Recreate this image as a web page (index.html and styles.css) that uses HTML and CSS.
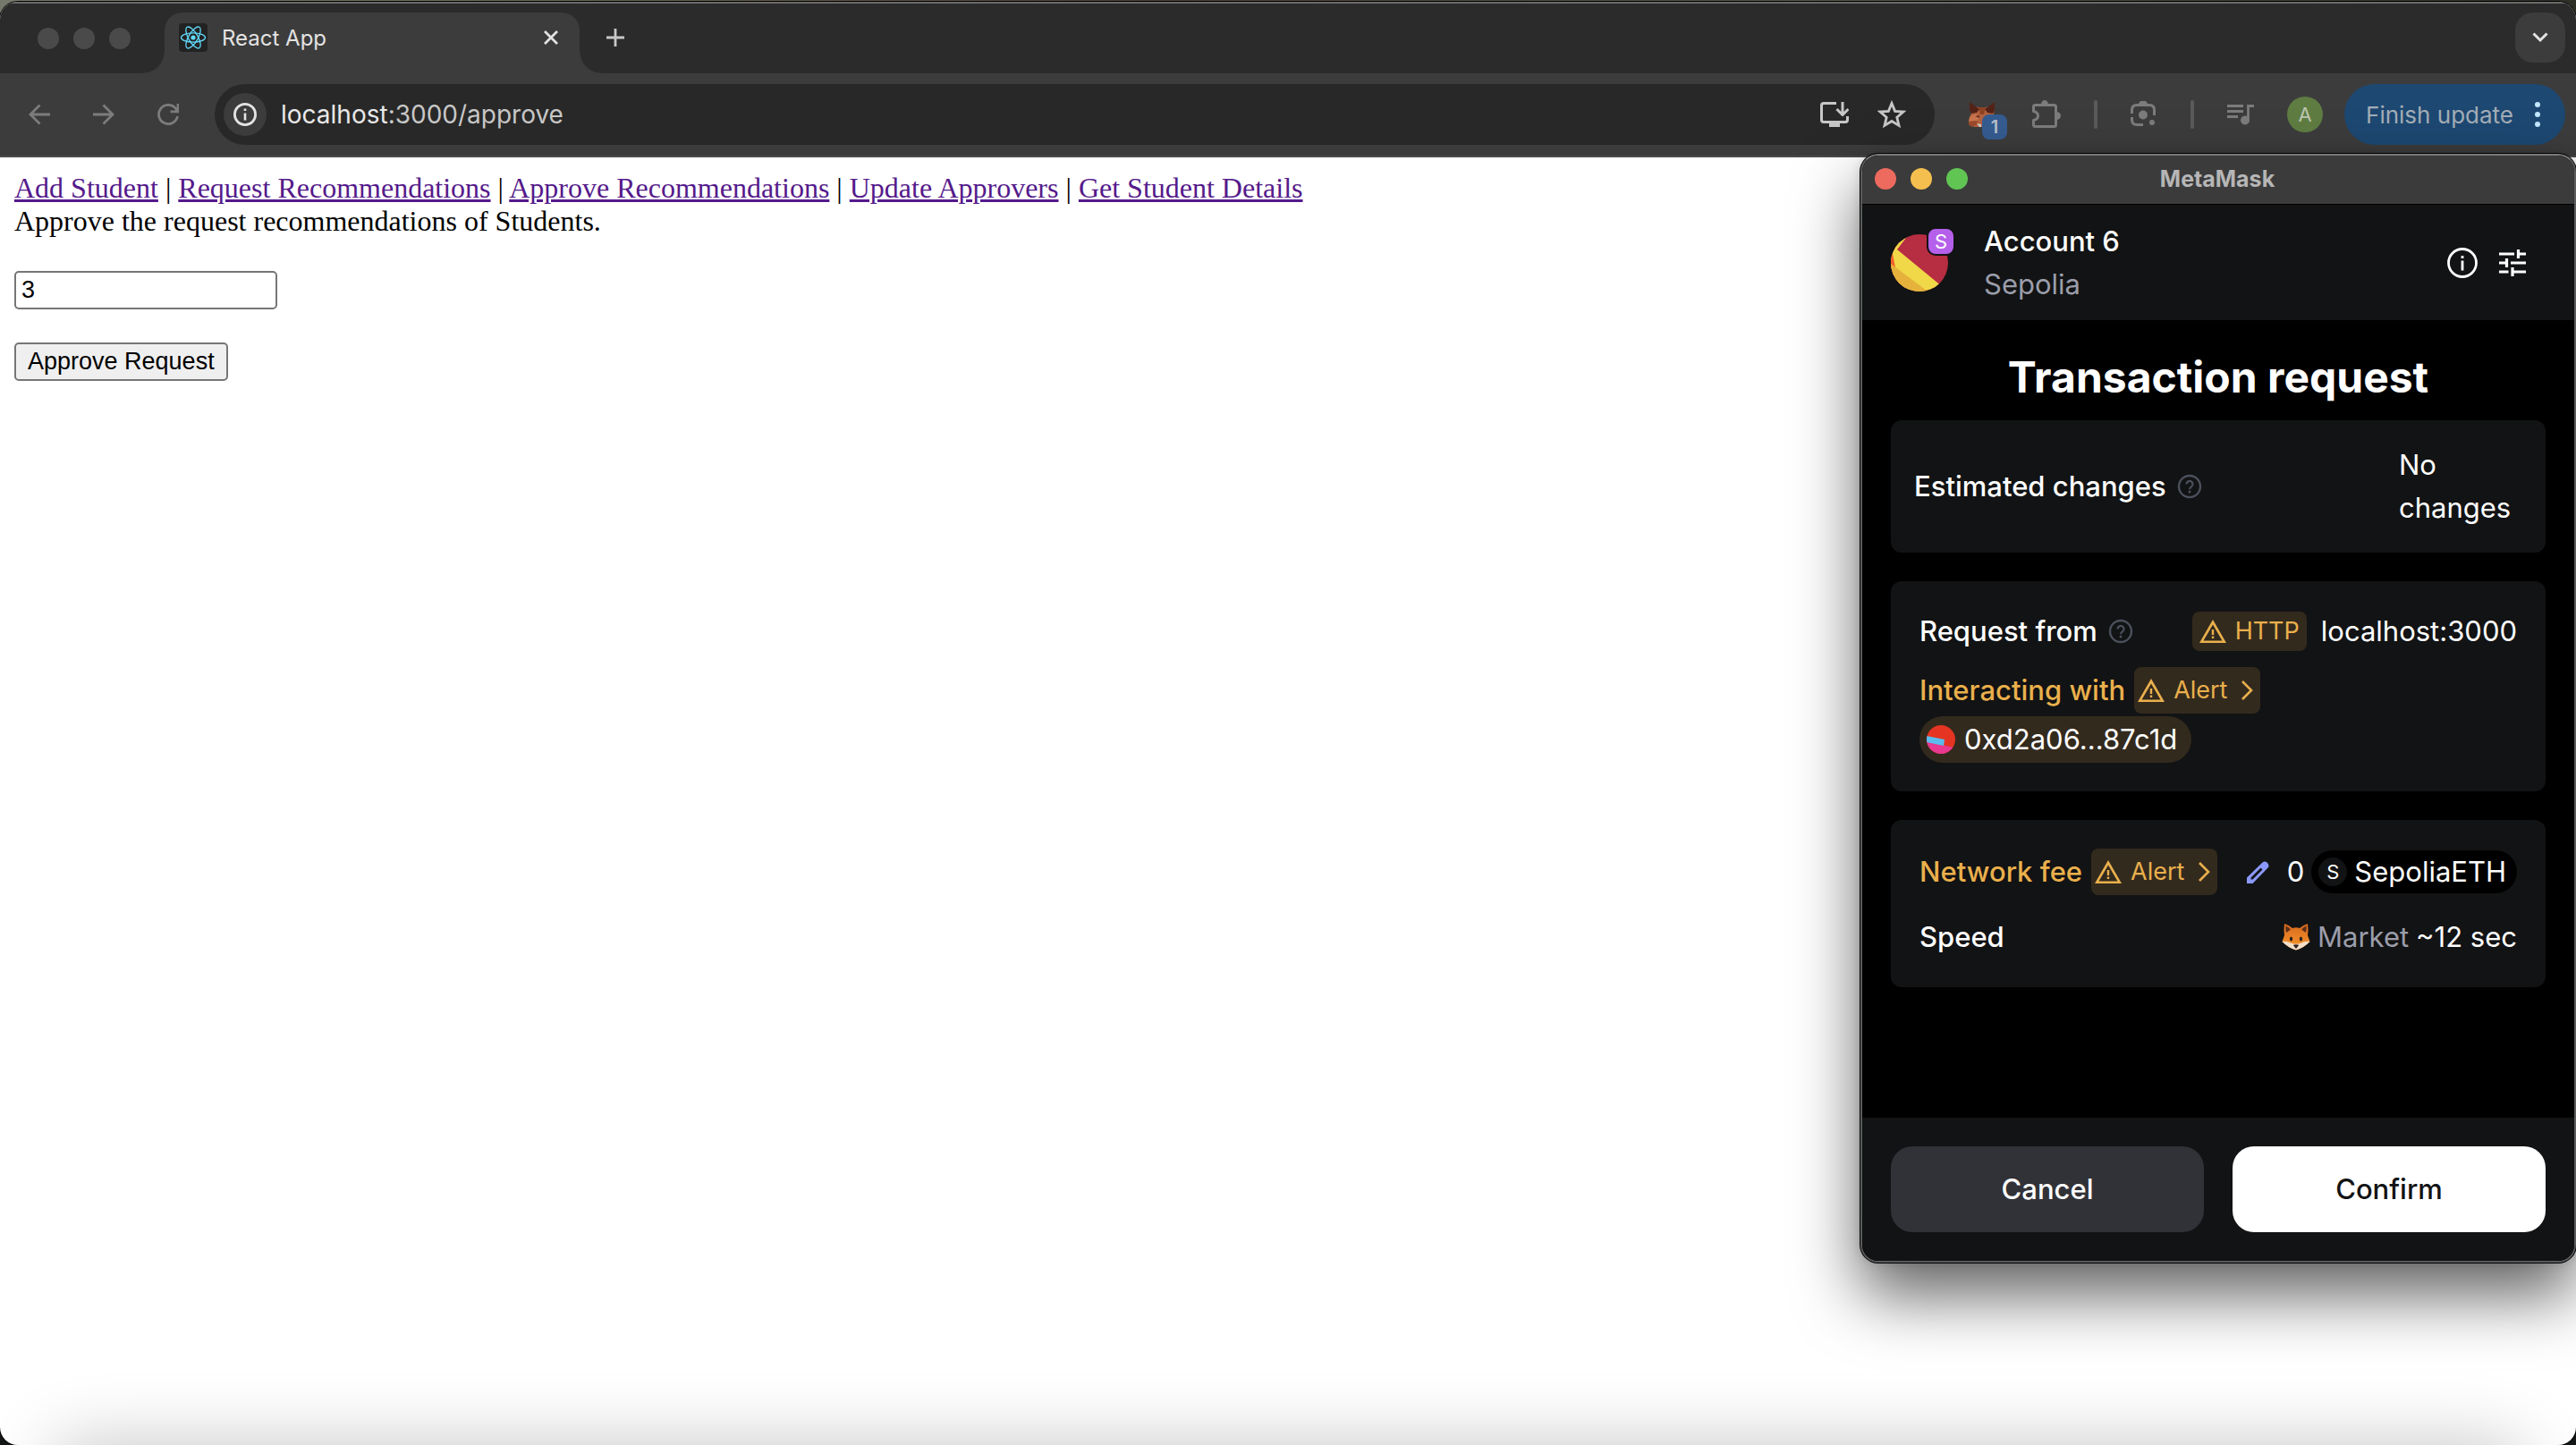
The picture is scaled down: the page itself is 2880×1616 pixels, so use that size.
FILE: index.html
```html
<!DOCTYPE html>
<html lang="en">
<head>
<meta charset="utf-8">
<title>React App</title>
<link rel="stylesheet" href="styles.css">
</head>
<body>
<svg class="defs" aria-hidden="true">
  <symbol id="warning" viewBox="0 0 30 26"><path fill="currentColor" fill-rule="evenodd" d="M15 0 30 26H0ZM15 5.500 4.500 23.500H25.500Z"/><path fill="currentColor" d="M13.800 11h2.400v6h-2.400zM13.800 18.500h2.400v2.400h-2.400z"/></symbol>
  <symbol id="chevron" viewBox="0 0 14 22"><path fill="none" stroke="currentColor" stroke-width="2.600" d="M2 1 12 11 2 21"/></symbol>
  <symbol id="question" viewBox="0 0 28 28"><circle cx="14" cy="14" r="12" fill="none" stroke="currentColor" stroke-width="2.400"/><path fill="none" stroke="currentColor" stroke-width="2.200" d="M10.500 11.500a3.500 3.500 0 1 1 5.600 2.700c-1.400 1-2.100 1.500-2.100 3"/><circle cx="14" cy="20" r="1.500" fill="currentColor"/></symbol>
  <symbol id="fox" viewBox="0 0 32 32"><defs><linearGradient id="fur" x1="0" y1="0" x2="0" y2="1"><stop offset="0" stop-color="#d9691c"/><stop offset="1" stop-color="#f7972f"/></linearGradient></defs><path fill="url(#fur)" d="M3 1Q9 3 12 6Q16 4.500 20 6Q23 3 29 1Q30 8 29 14L31.500 21Q24 28 16 30.500Q8 28 .5 21L3 14Q2 8 3 1Z"/><path fill="#5b2f1a" d="M4.500 3.500Q8 5 10 7.500L5 11Q4 7 4.500 3.500ZM27.500 3.500Q24 5 22 7.500L27 11Q28 7 27.500 3.500Z"/><path fill="#f3dfc8" d="M.5 21Q6 20 10 22.500Q13 24 16 23.500Q19 24 22 22.500Q26 20 31.500 21Q25 28 16 30.500Q7 28 .5 21Z"/><ellipse cx="10.500" cy="18" rx="1.700" ry="2.600" fill="#2e2320"/><ellipse cx="21.500" cy="18" rx="1.700" ry="2.600" fill="#2e2320"/><path fill="#2e2320" d="M12.800 25Q16 23.500 19.200 25L16 29Z"/></symbol>
</svg>

<div class="browser">
  <header class="tabstrip">
    <div class="lights lights-idle"><span></span><span></span><span></span></div>
    <div class="tab">
      <svg class="favicon" viewBox="0 0 32 32"><rect width="32" height="32" rx="4" fill="#222"/><g fill="none" stroke="#61dafb" stroke-width="1.300"><ellipse cx="16" cy="16" rx="13.500" ry="5.200"/><ellipse cx="16" cy="16" rx="13.500" ry="5.200" transform="rotate(60 16 16)"/><ellipse cx="16" cy="16" rx="13.500" ry="5.200" transform="rotate(120 16 16)"/></g><circle cx="16" cy="16" r="2.600" fill="#61dafb"/></svg>
      <span class="tab-title">React App</span>
      <button class="icon-button" aria-label="Close tab"><svg width="16" height="16" viewBox="0 0 16 16"><path stroke="#e3e3e3" stroke-width="2.800" d="M1 1 15 15M15 1 1 15"/></svg></button>
    </div>
    <button class="icon-button new-tab" aria-label="New tab"><svg width="20" height="20" viewBox="0 0 20 20"><path stroke="#c7c7c7" stroke-width="2.800" d="M10 0V20M0 10H20"/></svg></button>
    <button class="icon-button tab-search" aria-label="Search tabs"><svg width="18" height="12" viewBox="0 0 18 12"><path fill="none" stroke="#e3e3e3" stroke-width="3" d="M1.500 1.500 9 9 16.500 1.500"/></svg></button>
  </header>

  <div class="toolbar">
    <nav class="history" aria-label="History">
      <button class="icon-button" aria-label="Back"><svg width="24" height="24" viewBox="0 0 24 24"><path fill="none" stroke="#7c7c7c" stroke-width="2.800" d="M24 12H2M12.500 1.500 2 12 12.500 22.500"/></svg></button>
      <button class="icon-button" aria-label="Forward"><svg width="24" height="24" viewBox="0 0 24 24"><path fill="none" stroke="#7c7c7c" stroke-width="2.800" d="M0 12H22M11.500 1.500 22 12 11.500 22.500"/></svg></button>
      <button class="icon-button" aria-label="Reload"><svg width="24" height="24" viewBox="0 0 24 24"><path fill="none" stroke="#7c7c7c" stroke-width="2.800" d="M22.500 14A10.600 10.600 0 1 1 20.500 5.500L23 8.500M23 0V8.800H14.500"/></svg></button>
    </nav>
    <div class="omnibox">
      <button class="icon-button site-info" aria-label="Site information"><svg width="26" height="26" viewBox="0 0 26 26"><circle cx="13" cy="13" r="11.600" fill="none" stroke="#e3e3e3" stroke-width="2.800"/><path fill="#e3e3e3" d="M11.700 11.500h2.600v8h-2.600zM11.700 6.500h2.600v2.600h-2.600z"/></svg></button>
      <span class="url"><span class="url-host">localhost</span>:3000/approve</span>
      <button class="icon-button" aria-label="Install app"><svg width="32" height="28" viewBox="0 0 32 28"><path fill="none" stroke="#c7c7c7" stroke-width="3" stroke-linejoin="round" d="M18 1.500H4Q1.500 1.500 1.500 4V20Q1.500 22.500 4 22.500H28Q30.500 22.500 30.500 20V16M25 0V13M18.500 8 25 14.500 31.500 8"/><path fill="#c7c7c7" d="M10 22h12v6H10z"/></svg></button>
      <button class="icon-button" aria-label="Bookmark this page"><svg width="32" height="32" viewBox="0 0 32 32"><path fill="none" stroke="#c7c7c7" stroke-width="2.800" d="M16 3.500 19.600 12.300 29 13 21.800 19.200 24 28.400 16 23.500 8 28.400 10.200 19.200 3 13 12.400 12.300Z"/></svg></button>
    </div>
    <div class="extensions">
      <button class="icon-button metamask-ext" aria-label="MetaMask"><svg width="30" height="28" viewBox="0 0 30 28"><path fill="#b4623e" d="M1 4 11 6H19L29 4 28 14 30 20 24 28H6L0 25 1 17 3 13Z"/><path fill="#8f4426" d="M11 6H19L17 14H13Z"/><path fill="#542318" d="M1 0 12 8 9 12 3 13 1 9ZM29 0 18 8 21 12 27 13 29 9Z"/><path fill="#c9754f" d="M1 17 8 13 12 18 9 21 0 22Z"/><path fill="#6b3020" d="M7 16 12 15 12 18Z"/><path fill="#9c4a2b" d="M0 22 9 21 10 25 3 28 0 25Z"/><path fill="#cfc6c0" d="M9 24 14 25V28H12Z"/></svg><span class="ext-badge">1</span></button>
      <button class="icon-button" aria-label="Extensions"><svg width="32" height="34" viewBox="0 0 32 34"><path fill="none" stroke="#7c7c7c" stroke-width="3" stroke-linejoin="round" d="M3.500 6.500H24.500Q26.500 6.500 26.500 8.500V28.500Q26.500 30.500 24.500 30.500H3.500Q1.500 30.500 1.500 28.500V23.500Q6.500 22.500 6.500 18.500T1.500 13.500V8.500Q1.500 6.500 3.500 6.500Z"/><path fill="#7c7c7c" d="M10 6a4 5 0 0 1 8 0zM27 14a5 4.500 0 0 1 0 9z"/></svg></button>
      <span class="divider"></span>
      <button class="icon-button" aria-label="Search with Lens"><svg width="30" height="30" viewBox="0 0 30 30"><path fill="none" stroke="#7c7c7c" stroke-width="3" d="M1.500 14V10Q1.500 4.500 7 4.500H21Q26.500 4.500 26.500 10V16M1.500 18V21Q1.500 26.500 7 26.500H14"/><path fill="#7c7c7c" d="M8 4 11 0H17L20 4Z"/><circle cx="14" cy="15.500" r="5" fill="#7c7c7c"/><circle cx="24" cy="24" r="3" fill="#7c7c7c"/></svg></button>
      <span class="divider"></span>
      <button class="icon-button" aria-label="Media controls"><svg width="30" height="24" viewBox="0 0 30 24"><path fill="none" stroke="#7c7c7c" stroke-width="2.800" d="M0 2.500H18M0 8.500H18M0 14.500H12M23.500 18V2.500H30"/><circle cx="20" cy="18.500" r="5" fill="#7c7c7c"/></svg></button>
      <button class="icon-button profile" aria-label="Profile">A</button>
    </div>
    <button class="update">Finish update<svg width="6" height="28" viewBox="0 0 6 28"><g fill="#c2e7ff"><circle cx="3" cy="3" r="3"/><circle cx="3" cy="14" r="3"/><circle cx="3" cy="25" r="3"/></g></svg></button>
  </div>

  <main class="page">
    <nav><a href="#add">Add Student</a> | <a href="#request">Request Recommendations</a> | <a href="#approve">Approve Recommendations</a> | <a href="#update">Update Approvers</a> | <a href="#details">Get Student Details</a></nav>
    <label for="request-id">Approve the request recommendations of Students.</label>
    <input id="request-id" type="text" value="3">
    <button class="approve">Approve Request</button>
  </main>
</div>

<section class="wallet" aria-label="MetaMask">
  <div class="titlebar">
    <div class="lights"><span class="red"></span><span class="yellow"></span><span class="green"></span></div>
    <span class="window-title">MetaMask</span>
  </div>
  <header class="account">
    <div class="avatar">
      <svg width="64" height="64" viewBox="0 0 64 64"><defs><clipPath id="disc"><circle cx="32" cy="32" r="32"/></clipPath></defs><g clip-path="url(#disc)"><rect width="64" height="64" fill="#b72d41"/><path fill="#f0d848" d="M20 0 7 17 58 59 44 66 0 66 0 0Z"/><path fill="#e6b23c" d="M0 33 44 66H0Z"/><path fill="#f2602a" d="M0 20 2 22 5 37 0 33Z"/></g></svg>
      <span class="network-badge">S</span>
    </div>
    <div class="account-name"><strong>Account 6</strong><span>Sepolia</span></div>
    <button class="icon-button" aria-label="Account details"><svg width="34" height="34" viewBox="0 0 34 34"><circle cx="17" cy="17" r="15.500" fill="none" stroke="#fff" stroke-width="2.800"/><path fill="#fff" d="M15.600 14.500h2.800v11h-2.800zM15.600 9h2.800v3h-2.800z"/></svg></button>
    <button class="icon-button" aria-label="Advanced details"><svg width="30" height="30" viewBox="0 0 30 30"><path fill="none" stroke="#fff" stroke-width="3.200" d="M0 5H17M21.500 0V10M21.500 5H30M0 15H8.500M8.500 10V20M13 15H30M0 25H10.500M15 20V30M15 25H30"/></svg></button>
  </header>
  <div class="content">
    <h1>Transaction request</h1>
    <div class="card card-estimate">
      <span class="label">Estimated changes<svg class="help"><use href="#question"/></svg></span>
      <span class="estimate">No changes</span>
    </div>
    <div class="card">
      <div class="row">
        <span class="label">Request from<svg class="help"><use href="#question"/></svg></span>
        <span class="value origin"><span class="tag"><svg class="warn"><use href="#warning"/></svg>HTTP</span>localhost:3000</span>
      </div>
      <div class="row row-contract">
        <span class="label caution">Interacting with<button class="tag alert"><svg class="warn"><use href="#warning"/></svg>Alert<svg class="chev"><use href="#chevron"/></svg></button></span>
        <button class="address"><svg width="32" height="32" viewBox="0 0 32 32"><defs><clipPath id="dot"><circle cx="16" cy="16" r="16"/></clipPath></defs><g clip-path="url(#dot)"><rect width="32" height="32" fill="#e63422"/><path fill="#e8388f" d="M0 18 30 25V32H0Z"/><path fill="#5bbdee" d="M0 12 20 16 19 23 0 19Z"/></g></svg>0xd2a06...87c1d</button>
      </div>
    </div>
    <div class="card">
      <div class="row">
        <span class="label caution">Network fee<button class="tag alert"><svg class="warn"><use href="#warning"/></svg>Alert<svg class="chev"><use href="#chevron"/></svg></button></span>
        <span class="value"><button class="icon-button edit" aria-label="Edit fee"><svg width="25" height="25" viewBox="0 0 25 25"><path fill="#8b99ff" fill-rule="evenodd" d="M0 25V18.500L17.500 1.500Q20-.8 22.800 1.800Q25.800 5 23.500 7.500L6.500 25ZM4.500 20.500H6.500L17.500 9.500 15.500 7.500 4.500 18.500Z"/></svg></button>0<span class="currency"><span class="coin">S</span>SepoliaETH</span></span>
      </div>
      <div class="row row-speed">
        <span class="label">Speed</span>
        <span class="value"><svg class="fox"><use href="#fox"/></svg><span class="muted">Market</span>~12 sec</span>
      </div>
    </div>
  </div>
  <footer class="actions">
    <button class="cancel">Cancel</button>
    <button class="confirm">Confirm</button>
  </footer>
</section>
</body>
</html>
```
FILE: styles.css
```css
* {
  box-sizing: border-box;
}

body {
  margin: 0;
  min-height: 100vh;
  display: flex;
  position: relative;
  overflow: hidden;
  background: linear-gradient(90deg, #75796c, #6a6a55 20%, #4c4038 45%, #555a48 70%, #2e3028) top / 100% 16px no-repeat #131715;
  font-family: Inter, "Liberation Sans", sans-serif;
}

button {
  font: inherit;
  margin: 0;
  cursor: pointer;
}

.defs {
  position: absolute;
  width: 0;
  height: 0;
}

.icon-button {
  display: flex;
  align-items: center;
  justify-content: center;
  flex: none;
  padding: 0;
  border: 0;
  background: none;
}

/* Browser window */
.browser {
  flex: 1;
  display: flex;
  flex-direction: column;
  margin-top: 2px;
  overflow: hidden;
  position: relative;
  border-radius: 20px;
  background: #fff;
  box-shadow: 0 0 0 1px #000;
}

/* Shade cast on the lower edge by the dock */
.browser::after {
  content: "";
  position: absolute;
  left: 60px;
  right: 60px;
  top: 100%;
  height: 80px;
  border-radius: 20px;
  box-shadow: 0 0 80px rgba(0, 0, 0, 0.24);
}

.tabstrip {
  display: flex;
  height: 80px;
  padding: 10px 12px 0 42px;
  background: #2b2b2b;
  border-top: 2px solid #6b6b6b;
}

.lights {
  display: flex;
  gap: 16px;
}

.lights span {
  width: 24px;
  height: 24px;
  border-radius: 50%;
}

.lights-idle {
  margin: 17px 38px 0 0;
}

.lights-idle span {
  background: #4a4a4a;
}

.red {
  background: #ed6a5e;
}

.yellow {
  background: #f5bf4f;
}

.green {
  background: #61c554;
}

.tab {
  position: relative;
  display: flex;
  align-items: center;
  width: 464px;
  height: 68px;
  padding: 0 24px 12px 16px;
  border-radius: 20px 20px 0 0;
  background: #3c3c3c;
}

.tab::before,
.tab::after {
  content: "";
  position: absolute;
  bottom: 0;
  width: 24px;
  height: 24px;
}

.tab::before {
  right: 100%;
  background: radial-gradient(circle at 0 0, #2b2b2b 23px, #3c3c3c 24px);
}

.tab::after {
  left: 100%;
  background: radial-gradient(circle at 100% 0, #2b2b2b 23px, #3c3c3c 24px);
}

.favicon {
  width: 32px;
  height: 32px;
}

.tab-title {
  flex: 1;
  margin-left: 16px;
  font-size: 24px;
  color: #e3e3e3;
}

.new-tab {
  height: 56px;
  margin-left: 30px;
}

.tab-search {
  width: 56px;
  height: 56px;
  margin-left: auto;
  border-radius: 20px;
  background: #3c3c3c;
}

.toolbar {
  display: flex;
  align-items: center;
  height: 94px;
  padding: 0 12px 0 32px;
  background: #3c3c3c;
  border-bottom: 2px solid #4a4a4a;
}

.history {
  display: flex;
  gap: 48px;
  margin-right: 40px;
}

.omnibox {
  flex: 1;
  display: flex;
  align-items: center;
  gap: 32px;
  height: 68px;
  padding: 0 32px 0 10px;
  border-radius: 34px;
  background: #282828;
}

.site-info {
  width: 48px;
  height: 48px;
  margin-right: -16px;
  border-radius: 50%;
  background: #3c3c3c;
}

.url {
  flex: 1;
  font-size: 28px;
  color: #c7c7c7;
}

.url-host {
  color: #e8e8e8;
}

.extensions {
  display: flex;
  align-items: center;
  gap: 37px;
  margin: 0 24px 0 38px;
}

.metamask-ext {
  position: relative;
  margin-right: 4px;
}

.ext-badge {
  position: absolute;
  left: 15px;
  top: 14px;
  width: 28px;
  height: 28px;
  border-radius: 8px;
  background: #355c91;
  color: #b8c0cc;
  font-size: 20px;
  font-weight: 600;
  line-height: 28px;
  text-align: center;
}

.divider {
  width: 4px;
  height: 32px;
  border-radius: 2px;
  background: #5a5a5a;
}

.profile {
  width: 40px;
  height: 40px;
  border-radius: 50%;
  background: #5f7d42;
  color: #bcc6b2;
  font-size: 22px;
}

.update {
  display: flex;
  align-items: center;
  gap: 24px;
  height: 68px;
  padding: 0 28px 0 24px;
  border: 0;
  border-radius: 34px;
  background: #1d4872;
  color: #a3adb6;
  font-size: 26px;
}

/* Web page */
.page {
  padding: 16px;
  font-family: "Liberation Serif", "Times New Roman", serif;
  font-size: 32px;
  line-height: 37px;
  color: #000;
}

.page a {
  color: #551a8b;
}

.page label,
.page input,
.page .approve {
  display: block;
}

.page input,
.page .approve {
  height: 43px;
  margin-top: 37px;
  border: 2px solid #767676;
  border-radius: 5px;
  font-family: "Liberation Sans", Arial, sans-serif;
  font-size: 27px;
  line-height: 37px;
  color: #000;
}

.page input {
  width: 294px;
  padding: 0 6px;
  background: #fff;
}

.page .approve {
  padding: 0 13px;
  background: #efefef;
}

/* Wallet popup window */
.wallet {
  position: absolute;
  top: 172px;
  right: 0;
  width: 800px;
  display: flex;
  flex-direction: column;
  overflow: hidden;
  border: 2px solid #5a5b5c;
  border-top-color: #7a7a7a;
  border-radius: 20px;
  background: #000;
  color: #fff;
  font-size: 31px;
  line-height: 48px;
  box-shadow: 0 0 0 1px #000, 0 36px 72px rgba(0, 0, 0, 0.62), 0 0 12px rgba(0, 0, 0, 0.15);
}

.titlebar {
  display: flex;
  align-items: center;
  height: 55px;
  padding: 0 0 2px 14px;
  background: #3b3b3b;
  border-bottom: 1px solid #000;
}

.window-title {
  flex: 1;
  margin-right: 120px;
  text-align: center;
  font-size: 25px;
  font-weight: 700;
  color: #b6b6b6;
}

.account {
  display: flex;
  align-items: center;
  gap: 24px;
  height: 129px;
  padding: 0 54px 0 32px;
  background: #121314;
}

.avatar {
  position: relative;
  display: flex;
}

.network-badge {
  position: absolute;
  right: -8px;
  top: -8px;
  width: 32px;
  height: 32px;
  border: 2px solid #121314;
  border-radius: 10px;
  background: #b560eb;
  font-size: 22px;
  line-height: 28px;
  text-align: center;
}

.account-name {
  flex: 1;
  display: flex;
  flex-direction: column;
  margin-left: 16px;
}

.account-name strong {
  font-weight: 500;
}

.account-name span,
.muted {
  color: #9b9daa;
}

.content {
  display: flex;
  flex-direction: column;
  gap: 32px;
  padding: 32px 32px 146px;
}

h1 {
  margin: 0 0 -16px;
  text-align: center;
  font-size: 48px;
  line-height: 64px;
  font-weight: 700;
}

.card {
  display: flex;
  flex-direction: column;
  padding: 32px;
  border-radius: 12px;
  background: #121314;
}

.card-estimate {
  flex-direction: row;
  align-items: center;
  justify-content: space-between;
  padding: 26px;
}

.estimate {
  width: 138px;
}

.row {
  display: flex;
  align-items: center;
  justify-content: space-between;
}

.label {
  display: flex;
  align-items: center;
  font-weight: 500;
}

.value {
  display: flex;
  align-items: center;
  gap: 8px;
}

.help {
  width: 28px;
  height: 28px;
  margin-left: 12px;
  color: #4b505c;
}

.caution {
  color: #eab04c;
}

.origin {
  gap: 16px;
}

.tag {
  display: flex;
  align-items: center;
  gap: 10px;
  height: 44px;
  padding: 0 8px;
  border: 0;
  border-radius: 8px;
  background: #332a1e;
  color: #eab04c;
  font-size: 27px;
  font-weight: 400;
}

.warn {
  width: 30px;
  height: 26px;
}

.alert {
  height: 52px;
  margin-left: 10px;
  padding: 0 8px 0 4px;
}

.chev {
  width: 14px;
  height: 22px;
  margin-left: 5px;
}

.row-contract {
  flex-direction: column;
  align-items: flex-start;
  gap: 3px;
  margin-top: 16px;
}

.address {
  display: flex;
  align-items: center;
  gap: 10px;
  height: 52px;
  padding: 0 16px 0 8px;
  border: 0;
  border-radius: 26px;
  background: #332a1e;
  color: #fff;
}

.edit {
  margin-right: 12px;
}

.currency {
  display: flex;
  align-items: center;
  gap: 8px;
  height: 48px;
  padding: 0 12px 0 8px;
  border-radius: 24px;
  background: #000;
}

.coin {
  width: 32px;
  height: 32px;
  border-radius: 50%;
  background: #121314;
  font-size: 22px;
  line-height: 32px;
  text-align: center;
}

.row-speed {
  margin-top: 23px;
}

.fox {
  width: 32px;
  height: 32px;
}

.actions {
  display: flex;
  gap: 32px;
  padding: 32px;
  background: #121314;
}

.actions button {
  flex: 1;
  height: 96px;
  border: 0;
  border-radius: 24px;
  font-weight: 500;
}

.cancel {
  background: #313237;
  color: #fff;
}

.confirm {
  background: #fff;
  color: #121314;
}
```
